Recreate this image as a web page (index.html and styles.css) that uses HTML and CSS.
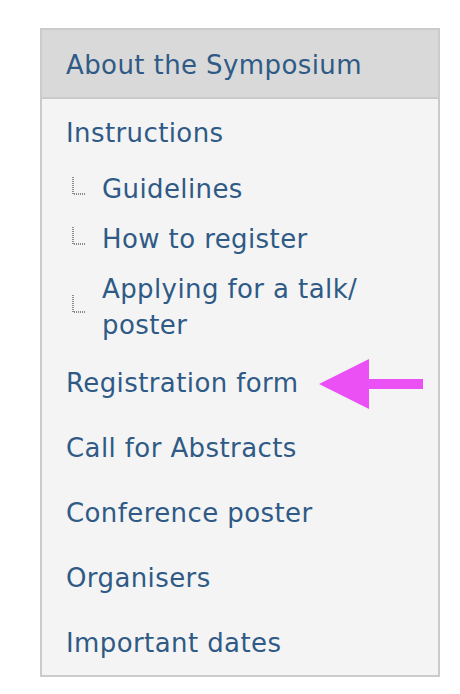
FILE: index.html
```html
<!DOCTYPE html>
<html>
<head>
<meta charset="utf-8">
<link rel="stylesheet" href="styles.css">
</head>
<body>
<nav class="menu">
  <div class="menu-head">About the Symposium</div>
  <ul class="menu-list">
    <li class="item item-parent"><a href="#">Instructions</a>
      <ul class="sub-list">
        <li class="sub-item"><span class="tree"><svg width="14" height="18" viewBox="0 0 14 18"><path d="M1 0V17H14" fill="none" stroke="#8a8a8a" stroke-width="2" stroke-dasharray="1 1"/></svg></span><a href="#">Guidelines</a></li>
        <li class="sub-item"><span class="tree"><svg width="14" height="18" viewBox="0 0 14 18"><path d="M1 0V17H14" fill="none" stroke="#8a8a8a" stroke-width="2" stroke-dasharray="1 1"/></svg></span><a href="#">How to register</a></li>
        <li class="sub-item"><span class="tree"><svg width="14" height="18" viewBox="0 0 14 18"><path d="M1 0V17H14" fill="none" stroke="#8a8a8a" stroke-width="2" stroke-dasharray="1 1"/></svg></span><a href="#">Applying for a talk/ poster</a></li>
      </ul>
    </li>
    <li class="item item-marked"><a href="#">Registration form</a>
      <svg class="pointer" width="106" height="52" viewBox="0 0 106 52"><path d="M0 26L50 1V21H104V31H50V51Z" fill="#ea50f3"/></svg>
    </li>
    <li class="item"><a href="#">Call for Abstracts</a></li>
    <li class="item"><a href="#">Conference poster</a></li>
    <li class="item"><a href="#">Organisers</a></li>
    <li class="item"><a href="#">Important dates</a></li>
  </ul>
</nav>
</body>
</html>
```
FILE: styles.css
```css
html, body {
  margin: 0;
  padding: 0;
  background: #ffffff;
}
body {
  padding: 28px 20px 0 40px;
  font-family: "DejaVu Sans", Verdana, sans-serif;
  font-size: 26px;
  letter-spacing: 0.4px;
  color: #2f5a86;
}
.menu {
  width: 396px;
  border: 2px solid #cbcbcb;
  background: #f4f4f4;
}
.menu-head {
  background: #d9d9d9;
  border-bottom: 2px solid #cbcbcb;
  padding: 0 24px;
  height: 67px;
  line-height: 70px;
}
.menu-list, .sub-list {
  list-style: none;
  margin: 0;
  padding: 0;
}
.menu-list {
  padding: 1px 0 0 24px;
}
.item {
  line-height: 36px;
  padding: 15px 0 14px;
}
.item-parent {
  padding-bottom: 0;
}
.item-marked {
  position: relative;
}
a {
  color: #2f5a86;
  text-decoration: none;
}
.sub-list {
  margin-top: 13px;
}
.sub-item {
  display: flex;
  align-items: center;
  padding: 7px 0;
  width: 300px;
}
.tree {
  display: flex;
  margin: -6px 16px 0 6px;
  flex: none;
}
.pointer {
  position: absolute;
  left: 253px;
  top: 8px;
}
```
